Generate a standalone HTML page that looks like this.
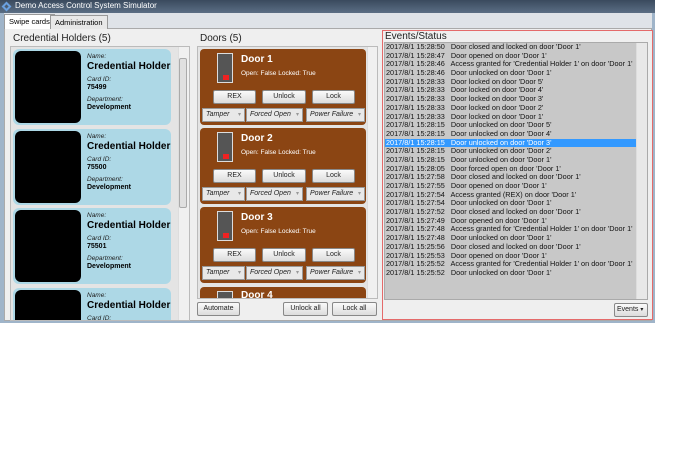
<!DOCTYPE html><html><head><style>
*{margin:0;padding:0;box-sizing:border-box}
body{width:690px;height:459px;background:#fff;font-family:"Liberation Sans",sans-serif;position:relative;overflow:hidden}
.a{position:absolute}
.win{left:0;top:0;width:655px;height:323px;background:#9fb4c9}
.title{left:0;top:0;width:655px;height:13px;background:linear-gradient(#3a4a5e,#5b6e84);color:#fff;font-size:8px;line-height:12px;padding-left:15px}
.tabs{left:4px;top:13px;width:648px;height:16px;background:#dfe3e8}
.tab{top:15px;height:14px;font-size:7.5px;line-height:13px;padding:0 4px;border:1px solid #999;border-bottom:none;background:#e8e8e8}
.content{left:4px;top:28px;width:648px;height:293px;background:#efefef;border:1px solid #aaa}
.hdr{font-size:10px;color:#222}
.list{background:#e4e4e4;border:1px solid #bbb}
.card{background:#add8e6;border-radius:6px;width:158px;height:76px;overflow:hidden}
.photo{background:#000;border-radius:6px;width:66px;height:72px;left:2px;top:2px}
.lbl{font-size:6.5px;font-style:italic;color:#222}
.bold{font-weight:bold;color:#000}
.nm{left:74px;top:12px;font-size:10px;white-space:nowrap}
.sb{background:#f0f0f0;border-left:1px solid #ddd}
.thumb{background:#e0e0e0;border:1px solid #aaa;border-radius:2px}
.door{background:#8b4513;border-radius:4px;width:166px;height:76px}
.ico{left:17px;top:4px;width:16px;height:30px;background:#555;border:1px solid #ddd}
.ico i{position:absolute;left:5px;top:21px;width:6px;height:5px;background:#e22}
.dt{left:41px;top:5px;color:#fff;font-weight:bold;font-size:10px}
.ds{left:41px;top:21px;color:#fff;font-size:6.5px}
.btn{background:linear-gradient(#fafafa,#dcdcdc);border:1px solid #888;border-radius:2px;font-size:7px;text-align:center;line-height:12px;height:14px;color:#222}
.dd{background:#e8e8e8;border:1px solid #999;font-size:7px;font-style:italic;line-height:12px;height:14px;padding-left:3px;color:#222}
.dd:after{content:"▾";position:absolute;right:3px;color:#999;font-size:6px;font-style:normal}
.ev{left:382px;top:30px;width:271px;height:290px;border:1px solid #e46a6a;background:#efefef}
.evl{left:384px;top:42px;width:264px;height:258px;background:#c8c8c8;border:1px solid #aaa}
.row{font-size:7.3px;line-height:8.7px;height:8.7px;white-space:pre;padding-left:1px;color:#111;width:251px}
.sel{background:#3399ff;color:#fff}
</style></head><body>
<div class="a win"></div>
<div class="a title">Demo Access Control System Simulator</div>
<div class="a" style="left:3px;top:3px;width:7px;height:7px;border:2px solid #6aa0e0;transform:rotate(45deg)"></div>
<div class="a tabs"></div>
<div class="a content"></div>
<div class="a tab" style="left:4px;top:14px;height:15px;background:#fff">Swipe cards</div>
<div class="a tab" style="left:50px">Administration</div>

<div class="a hdr" style="left:13px;top:33px">Credential Holders (5)</div>
<div class="a list" style="left:10px;top:46px;width:180px;height:275px"></div>
<div class="a sb" style="left:178px;top:47px;width:11px;height:273px"></div>
<div class="a thumb" style="left:179px;top:58px;width:8px;height:150px"></div>

<div class="a card" style="left:13px;top:49px"><div class="a photo"></div><div class="a lbl" style="left:74px;top:4px">Name:</div><div class="a bold nm">Credential Holder :</div><div class="a lbl" style="left:74px;top:27px">Card ID:</div><div class="a bold" style="left:74px;top:35px;font-size:7px">75499</div><div class="a lbl" style="left:74px;top:47px">Department:</div><div class="a bold" style="left:74px;top:55px;font-size:7px">Development</div></div>
<div class="a card" style="left:13px;top:129px"><div class="a photo"></div><div class="a lbl" style="left:74px;top:4px">Name:</div><div class="a bold nm">Credential Holder :</div><div class="a lbl" style="left:74px;top:27px">Card ID:</div><div class="a bold" style="left:74px;top:35px;font-size:7px">75500</div><div class="a lbl" style="left:74px;top:47px">Department:</div><div class="a bold" style="left:74px;top:55px;font-size:7px">Development</div></div>
<div class="a card" style="left:13px;top:208px"><div class="a photo"></div><div class="a lbl" style="left:74px;top:4px">Name:</div><div class="a bold nm">Credential Holder :</div><div class="a lbl" style="left:74px;top:27px">Card ID:</div><div class="a bold" style="left:74px;top:35px;font-size:7px">75501</div><div class="a lbl" style="left:74px;top:47px">Department:</div><div class="a bold" style="left:74px;top:55px;font-size:7px">Development</div></div>
<div class="a card" style="left:13px;top:288px;height:32px;border-radius:6px 6px 0 0"><div class="a photo" style="height:40px"></div><div class="a lbl" style="left:74px;top:4px">Name:</div><div class="a bold nm">Credential Holder ·</div><div class="a lbl" style="left:74px;top:27px">Card ID:</div></div>

<div class="a hdr" style="left:200px;top:33px">Doors (5)</div>
<div class="a list" style="left:197px;top:46px;width:181px;height:253px"></div>
<div class="a sb" style="left:367px;top:47px;width:10px;height:251px"></div>

<div class="a door" style="left:200px;top:49px"><div class="a ico"><i></i></div><div class="a dt">Door 1</div><div class="a ds">Open: False Locked: True</div><div class="a btn" style="left:13px;top:41px;width:43px">REX</div><div class="a btn" style="left:62px;top:41px;width:44px">Unlock</div><div class="a btn" style="left:112px;top:41px;width:43px">Lock</div><div class="a dd" style="left:2px;top:59px;width:43px">Tamper</div><div class="a dd" style="left:46px;top:59px;width:57px">Forced Open</div><div class="a dd" style="left:106px;top:59px;width:59px">Power Failure</div></div>
<div class="a door" style="left:200px;top:128px"><div class="a ico"><i></i></div><div class="a dt">Door 2</div><div class="a ds">Open: False Locked: True</div><div class="a btn" style="left:13px;top:41px;width:43px">REX</div><div class="a btn" style="left:62px;top:41px;width:44px">Unlock</div><div class="a btn" style="left:112px;top:41px;width:43px">Lock</div><div class="a dd" style="left:2px;top:59px;width:43px">Tamper</div><div class="a dd" style="left:46px;top:59px;width:57px">Forced Open</div><div class="a dd" style="left:106px;top:59px;width:59px">Power Failure</div></div>
<div class="a door" style="left:200px;top:207px"><div class="a ico"><i></i></div><div class="a dt">Door 3</div><div class="a ds">Open: False Locked: True</div><div class="a btn" style="left:13px;top:41px;width:43px">REX</div><div class="a btn" style="left:62px;top:41px;width:44px">Unlock</div><div class="a btn" style="left:112px;top:41px;width:43px">Lock</div><div class="a dd" style="left:2px;top:59px;width:43px">Tamper</div><div class="a dd" style="left:46px;top:59px;width:57px">Forced Open</div><div class="a dd" style="left:106px;top:59px;width:59px">Power Failure</div></div>
<div class="a door" style="left:200px;top:287px;height:11px;border-radius:4px 4px 0 0;overflow:hidden"><div class="a ico" style="top:4px"></div><div class="a dt" style="top:3px">Door 4</div></div>

<div class="a btn" style="left:197px;top:302px;width:43px">Automate</div>
<div class="a btn" style="left:283px;top:302px;width:45px">Unlock all</div>
<div class="a btn" style="left:332px;top:302px;width:45px">Lock all</div>

<div class="a ev"></div>
<div class="a hdr" style="left:385px;top:31px">Events/Status</div>
<div class="a evl"></div>
<div class="a sb" style="left:636px;top:43px;width:11px;height:256px;background:#e8e8e8"></div>
<div class="a" style="left:385px;top:43px">
<div class="row">2017/8/1 15:28:50   Door closed and locked on door 'Door 1'</div>
<div class="row">2017/8/1 15:28:47   Door opened on door 'Door 1'</div>
<div class="row">2017/8/1 15:28:46   Access granted for 'Credential Holder 1' on door 'Door 1'</div>
<div class="row">2017/8/1 15:28:46   Door unlocked on door 'Door 1'</div>
<div class="row">2017/8/1 15:28:33   Door locked on door 'Door 5'</div>
<div class="row">2017/8/1 15:28:33   Door locked on door 'Door 4'</div>
<div class="row">2017/8/1 15:28:33   Door locked on door 'Door 3'</div>
<div class="row">2017/8/1 15:28:33   Door locked on door 'Door 2'</div>
<div class="row">2017/8/1 15:28:33   Door locked on door 'Door 1'</div>
<div class="row">2017/8/1 15:28:15   Door unlocked on door 'Door 5'</div>
<div class="row">2017/8/1 15:28:15   Door unlocked on door 'Door 4'</div>
<div class="row sel">2017/8/1 15:28:15   Door unlocked on door 'Door 3'</div>
<div class="row">2017/8/1 15:28:15   Door unlocked on door 'Door 2'</div>
<div class="row">2017/8/1 15:28:15   Door unlocked on door 'Door 1'</div>
<div class="row">2017/8/1 15:28:05   Door forced open on door 'Door 1'</div>
<div class="row">2017/8/1 15:27:58   Door closed and locked on door 'Door 1'</div>
<div class="row">2017/8/1 15:27:55   Door opened on door 'Door 1'</div>
<div class="row">2017/8/1 15:27:54   Access granted (REX) on door 'Door 1'</div>
<div class="row">2017/8/1 15:27:54   Door unlocked on door 'Door 1'</div>
<div class="row">2017/8/1 15:27:52   Door closed and locked on door 'Door 1'</div>
<div class="row">2017/8/1 15:27:49   Door opened on door 'Door 1'</div>
<div class="row">2017/8/1 15:27:48   Access granted for 'Credential Holder 1' on door 'Door 1'</div>
<div class="row">2017/8/1 15:27:48   Door unlocked on door 'Door 1'</div>
<div class="row">2017/8/1 15:25:56   Door closed and locked on door 'Door 1'</div>
<div class="row">2017/8/1 15:25:53   Door opened on door 'Door 1'</div>
<div class="row">2017/8/1 15:25:52   Access granted for 'Credential Holder 1' on door 'Door 1'</div>
<div class="row">2017/8/1 15:25:52   Door unlocked on door 'Door 1'</div>
</div>
<div class="a btn" style="left:614px;top:303px;width:34px;text-align:left;padding-left:2px">Events <span style="font-size:6px">▾</span></div>
</body></html>
